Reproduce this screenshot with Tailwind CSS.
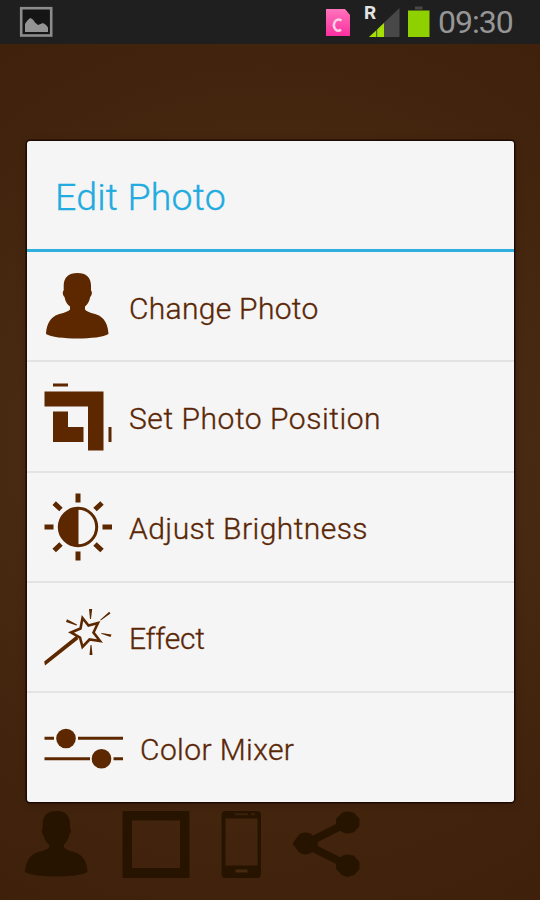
<!DOCTYPE html>
<html lang="en">
<head>
<meta charset="utf-8">
<title>Edit Photo</title>
<script src="https://cdn.jsdelivr.net/npm/@tailwindcss/browser@4"></script>
</head>
<body class="w-[540px] h-[900px] overflow-hidden font-['Roboto',sans-serif]">
<div class="w-[540px] h-[900px] flex flex-col bg-[radial-gradient(circle_at_50%_50%,#54321a_0%,#44260f_65%,#3e200b_100%)]">
  <header class="h-11 shrink-0 bg-[#1f1f1f] flex justify-between">
    <svg class="w-[60px] h-11" viewBox="0 0 60 44">
      <rect x="21.2" y="8.2" width="30" height="27.3" fill="#151515" stroke="#8c8c8c" stroke-width="2.6"/>
      <path d="M25 32V24q3-5 5.500-6 3 1 4.500 4.500l3 2.500 5-2q4 2 5 4.500V32z" fill="#949494"/>
    </svg>
    <div class="flex">
      <svg class="w-[116px] h-11" viewBox="320 0 116 44">
        <defs><linearGradient id="sim" x2="0" y2="1"><stop stop-color="#ff74bb"/><stop offset="1" stop-color="#fb2fa0"/></linearGradient></defs>
        <path d="M326 9h19l5 6v21h-24z" fill="url(#sim)"/>
        <path d="M341.500 20.500q-4-2.500-6.500 1-2.500 4.500.5 8 3 2.500 5.500 0" fill="none" stroke="#fbd0e5" stroke-width="2.500"/>
        <text x="364" y="19" font-family="Roboto" font-weight="700" font-size="19" fill="#e4e4e4">R</text>
        <path d="M369 37L399.500 8V37z" fill="#484848"/>
        <path d="M369 37l7.200-6.500V37zM377.200 29.500l6.800-6.500V37h-6.800z" fill="#a5e100"/>
        <path d="M415 6.500h7.500v3H415z" fill="#484848"/>
        <path d="M408 10.500h21.500V37H408z" fill="#8fd000"/>
      </svg>
      <div class="w-[104px] pl-[2px] pt-[3px] text-[32px] leading-[38px] text-[#969696] whitespace-nowrap tracking-[-1px]">09:30</div>
    </div>
  </header>

  <main class="mt-[97px] ml-[27px] w-[486.500px] h-[661px] shrink-0 rounded-[3px] bg-[#f5f5f5] flex flex-col shadow-[0_0_0_1.500px_#1d0b03,0_2px_8px_#2a150766] text-[#5a2706] text-[30px] font-light [-webkit-text-stroke-width:0.35px]">
    <h1 class="h-[111px] shrink-0 border-b-3 border-[#2fafdd] pl-[28px] pt-[34px] text-[37.500px] leading-[44px] text-[#22abdf] whitespace-nowrap tracking-[0.2px]">Edit Photo</h1>
    <ul class="flex-1 flex flex-col whitespace-nowrap">
      <li class="h-[110px] flex items-center border-b-2 border-[#e3e3e3]">
        <svg class="w-[102px] h-[108px] shrink-0" viewBox="27 252 102 108" fill="#5d2800"><path id="person" d="M77.500 273c8.500 0 13.500 4.500 13.500 12.500v5c1.500 1 1 5-.8 6.500-1 5-3 8-5.200 9.500v3c3 3.500 9 3.500 14 6 7 4 9 11 9.500 18.500-9 6-53 6-62.500 0 .5-7.500 2.500-14.500 9.500-18.500 5-2.500 11-2.500 14.500-6v-3c-2.500-1.500-4.500-4.500-5.500-9.500-1.800-1.500-2.300-5.500-.8-6.500v-5c0-8 5-12.500 13.800-12.500z"/></svg>
        <span class="pt-[4px] tracking-[0.3px]">Change Photo</span>
      </li>
      <li class="h-[111px] flex items-center border-b-2 border-[#e3e3e3]">
        <svg class="w-[102px] h-[109px] shrink-0" viewBox="27 362 102 109" fill="#5d2800"><path d="M53 383.500h15v3H53zM44.500 391.500h59V450.500H88V406.500H44.500zM53 411.500h15v15.500h15.500V442H53zM108.500 427h3v15h-3z"/></svg>
        <span class="pt-[3px] tracking-[0.55px]">Set Photo Position</span>
      </li>
      <li class="h-[110px] flex items-center border-b-2 border-[#e3e3e3]">
        <svg class="w-[102px] h-[108px] shrink-0" viewBox="27 473 102 108"><circle cx="78" cy="527" r="18.700" fill="none" stroke="#5d2800" stroke-width="3"/><path d="M78.500 508a19 19 0 0 0 0 38z" fill="#5d2800"/><path d="M78 493.500v9M78 551.500v9M44.500 527h9M102.500 527h9.500M54.200 503.200l6.800 6.300M95 544l7 6.500M54.200 550.500l6.800-6.500M95 509.500l7-6.500" stroke="#5d2800" stroke-width="5"/></svg>
        <span class="pt-[2px] tracking-[0.45px]">Adjust Brightness</span>
      </li>
      <li class="h-[110px] flex items-center border-b-2 border-[#e3e3e3]">
        <svg class="w-[102px] h-[108px] shrink-0" viewBox="27 583 102 108" fill="#5d2800"><path d="M82.500 618l6 7.500 9.500-2.500-4.500 9.500 6.500 8.500-10.500-1.500-7 7.500-2.500-9.500-9-5 9.500-4z" fill="none" stroke="#5d2800" stroke-width="2.600"/><path d="M76 636l2.500 3L45 665.500l-.8-4zM89 609h3.200l-1.200 10h-1zM89.500 655h3l-1-10h-1zM66 622l1-2.800 10 5.300-.5 1zM110.500 613.500l-1.300-1.800-9 8 .5.700zM110.500 637l1-2.500-10-1.500-.3.800z"/></svg>
        <span class="pt-[3px] tracking-[-0.2px]">Effect</span>
      </li>
      <li class="h-[109px] flex items-center">
        <svg class="w-[113px] h-[109px] shrink-0" viewBox="27 693 113 109" fill="#5d2800"><path d="M44.500 738.300h9.500M78 738.300h45M44.500 758.700H90M113.500 758.700h9.500" stroke="#5d2800" stroke-width="3"/><circle cx="66" cy="738.500" r="9.800"/><circle cx="101.500" cy="758.700" r="9.800"/></svg>
        <span class="pt-1 tracking-[0.4px]">Color Mixer</span>
      </li>
    </ul>
  </main>

  <nav class="mt-2 ml-6 flex items-start fill-[#261400]">
    <svg class="w-[98px] h-[70px]" viewBox="45 272 98 70"><use href="#person"/></svg>
    <svg class="w-[98px] h-[70px]" viewBox="122 810 98 70"><path fill-rule="evenodd" d="M122.500 811h67v67h-67zM132 820.500v47.500h48v-47.500z"/></svg>
    <svg class="w-[73px] h-[70px]" viewBox="220 810 73 70"><path fill-rule="evenodd" d="M225.500 811h31.500q4 0 4 4v59q0 4-4 4h-31.500q-4 0-4-4v-59q0-4 4-4zM225.500 818.500v47h32v-47z"/><path d="M235 814.300h13M251 814.300h4" stroke="#3b210b" stroke-width="2"/><path d="M235.500 871h12" stroke="#46290f" stroke-width="3"/></svg>
    <svg class="w-[68px] h-[70px]" viewBox="293 810 68 70"><path d="M348 822.500L305 844l43 21.500" fill="none" stroke="#261400" stroke-width="8"/><path stroke="#261400" stroke-width="6" stroke-linejoin="round" d="M301.500 836.500l4-1 4 1 5.500 7-5.500 7-4 1-4-1-5.500-7zM343.500 815.500l4-1 5 1 4 4.500v5l-4 4.500-5 1-4-1-4.500-4.500v-5zM343.500 858.500l4-1 5 1 4 4.500v5l-4 4.500-5 1.500-4-1.500-4.500-4.500v-5z"/></svg>
  </nav>
</div>
</body>
</html>
